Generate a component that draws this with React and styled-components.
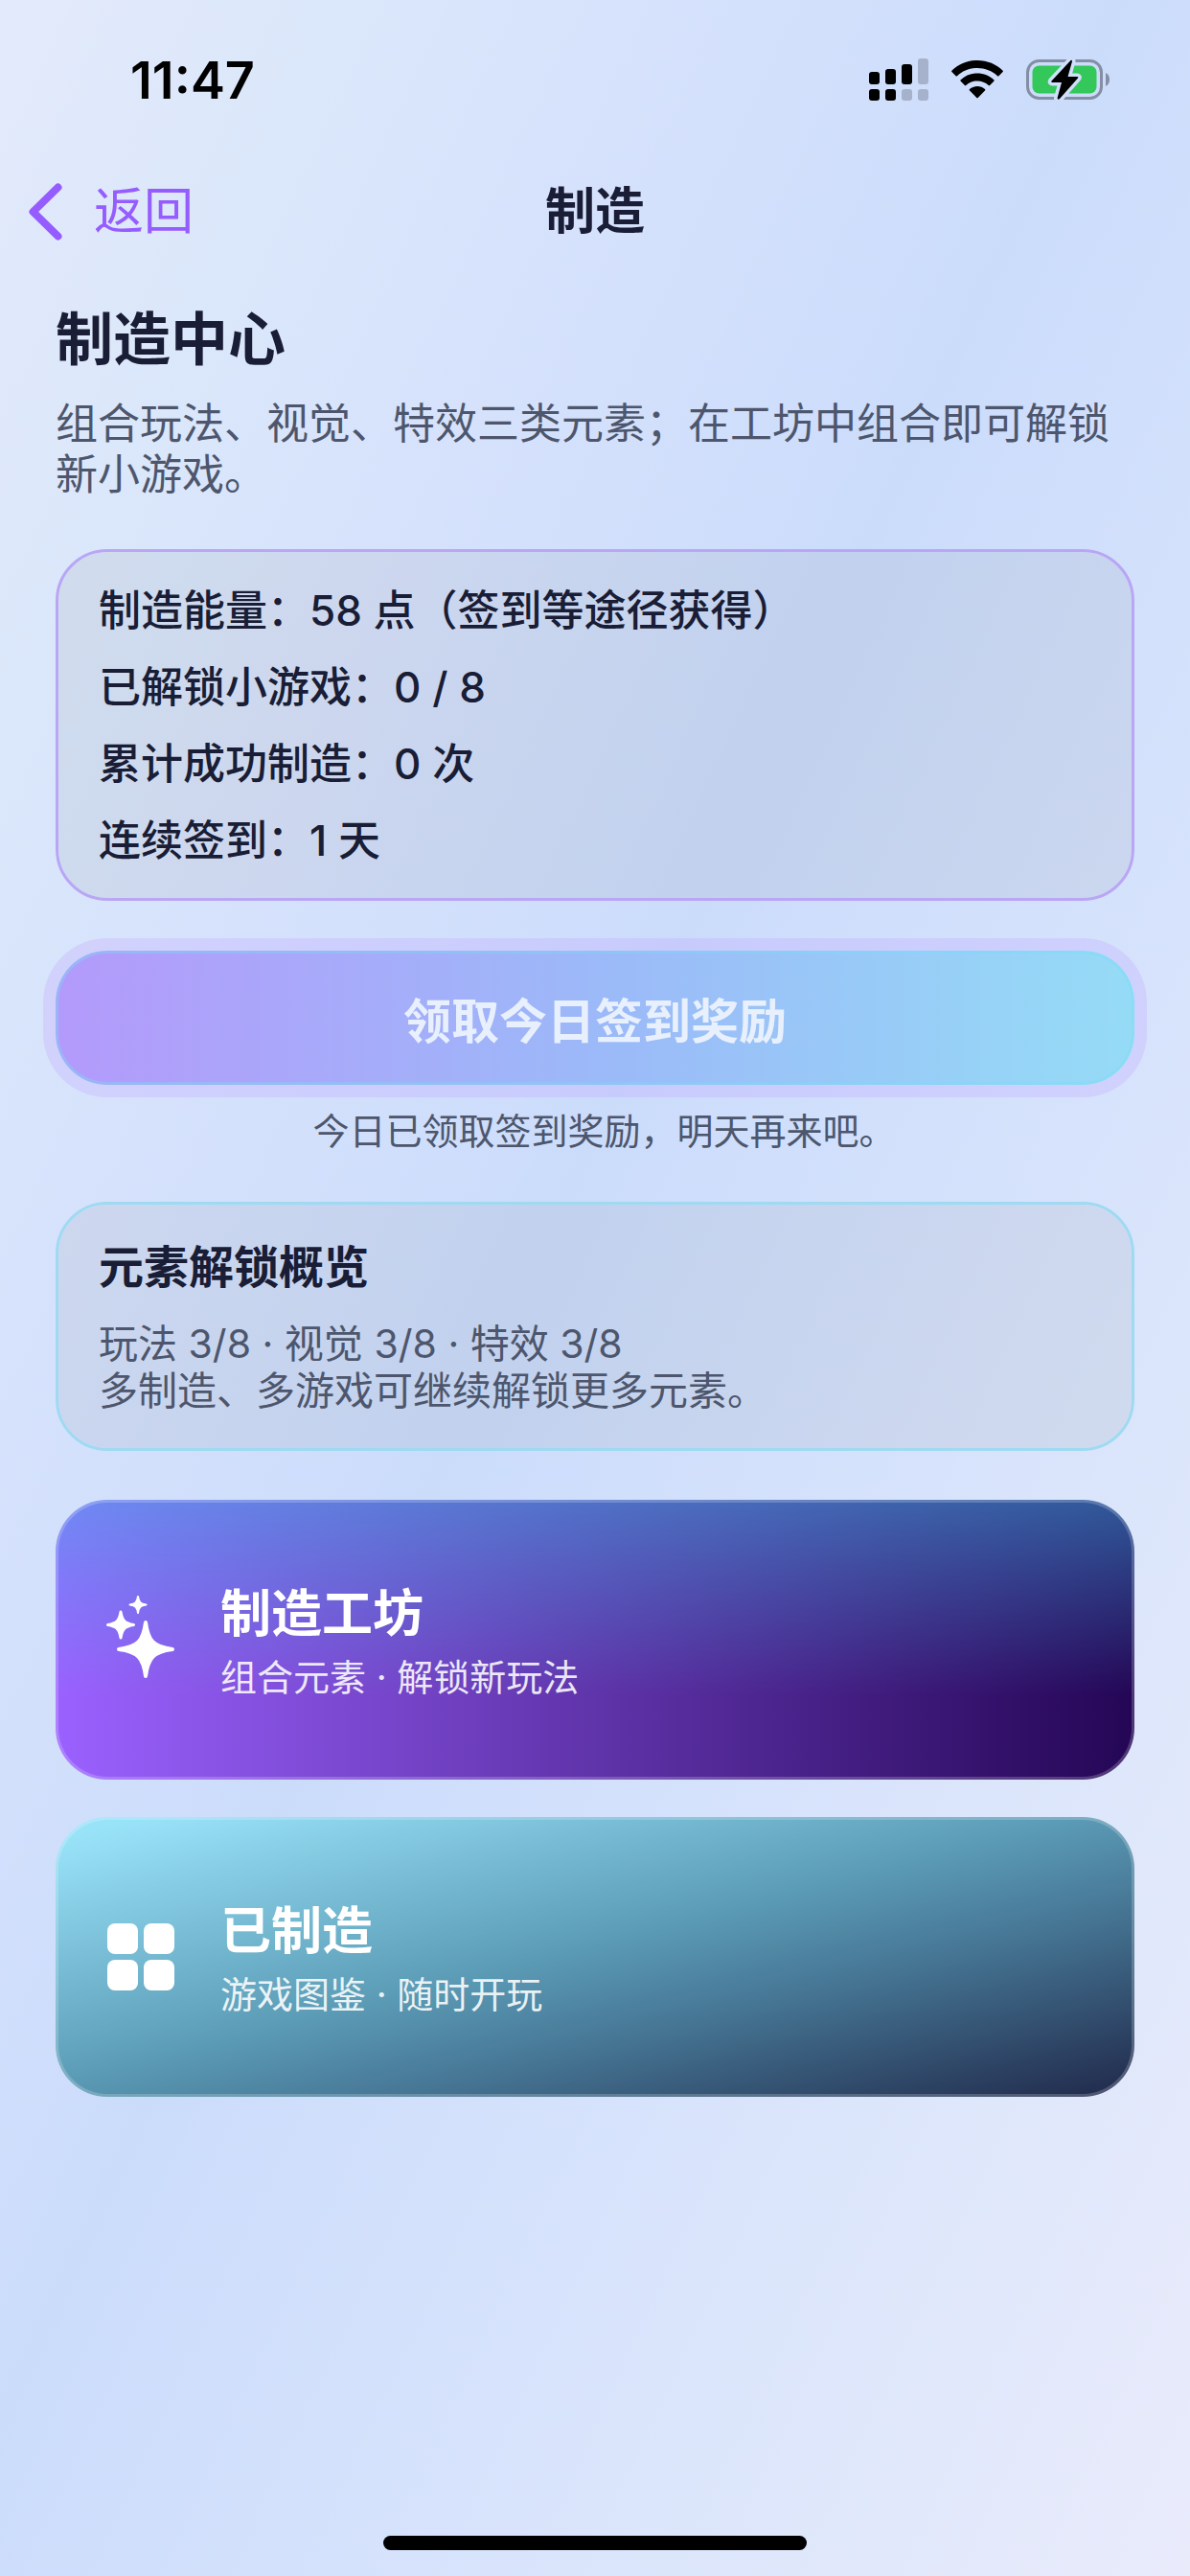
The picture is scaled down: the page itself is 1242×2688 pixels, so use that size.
import React from "react";
import styled, { createGlobalStyle } from "styled-components";

const GlobalStyle = createGlobalStyle`
  * {
    box-sizing: border-box;
  }

  body {
    margin: 0;
    font-family: Inter, "Noto Sans CJK SC", sans-serif;
    color: #191d35;
  }
`;

const Screen = styled.div`
  min-height: 100vh;
  display: flex;
  flex-direction: column;
  background: linear-gradient(
    to bottom right,
    #e3eafb 0%,
    #dbe7fa 14%,
    #d6e2fc 28%,
    #cbdcfb 47%,
    #d7e3fc 68%,
    #dce6fb 78%,
    #e9ebfb 100%
  );
`;

const StatusBar = styled.div`
  height: 166px;
  padding: 0 84px 0 136px;
  display: flex;
  align-items: center;
  justify-content: space-between;
`;

const Time = styled.span`
  font-size: 54px;
  font-weight: 600;
  color: #000;
`;

const StatusIcons = styled.div`
  display: flex;
  align-items: center;
  gap: 24px;
`;

const NavBar = styled.header`
  height: 110px;
  padding: 0 28px;
  display: grid;
  grid-template-columns: 1fr auto 1fr;
  align-items: center;
`;

const BackButton = styled.button`
  justify-self: start;
  display: flex;
  align-items: center;
  gap: 30px;
  padding: 0;
  border: none;
  background: transparent;
  font-family: inherit;
  font-size: 52px;
  line-height: 72px;
  color: #955cff;
  cursor: pointer;
`;

const NavTitle = styled.h1`
  margin: 0;
  font-size: 52px;
  line-height: 72px;
  font-weight: 600;
`;

const Content = styled.main`
  padding: 42px 58px;
  display: flex;
  flex-direction: column;
`;

const PageTitle = styled.h2`
  margin: 0 0 26px;
  font-size: 60px;
  line-height: 72px;
  font-weight: 700;
`;

const Intro = styled.p`
  margin: 0 0 51px;
  font-size: 44px;
  line-height: 53px;
  color: #4d566c;
`;

const Panel = styled.section`
  border: 3px solid ${(props) => props.$border};
  border-radius: 54px;
  background: rgba(24, 16, 0, 0.05);
  background-clip: padding-box;
`;

const StatsPanel = styled(Panel)`
  padding: 21px 42px 20px;
  margin-bottom: 52px;
`;

const StatLine = styled.p`
  margin: 0;
  font-size: 44px;
  line-height: 80px;
  font-weight: 500;
`;

const ClaimButton = styled.button`
  height: 140px;
  padding: 0;
  border: 3px solid transparent;
  border-radius: 54px;
  background:
    linear-gradient(to right, #b39afb, #9bbaf8 52%, #95dbf6) padding-box,
    linear-gradient(to right, #9ab4f8, #90c4f8 50%, #8adcf7) border-box;
  box-shadow: 0 0 0 13px rgba(190, 160, 255, 0.28);
  font-family: inherit;
  font-size: 50px;
  font-weight: 600;
  color: #e8f0fd;
`;

const ClaimNote = styled.p`
  margin: 24px 0 50px;
  font-size: 38px;
  line-height: 48px;
  text-align: center;
  text-indent: 19px;
  color: #4d566c;
`;

const OverviewPanel = styled(Panel)`
  padding: 35px 42px 35px;
  margin-bottom: 51px;
`;

const OverviewTitle = styled.h3`
  margin: 0 0 26px;
  font-size: 47px;
  line-height: 60px;
  font-weight: 600;
`;

const OverviewText = styled.p`
  margin: 0;
  font-size: 41px;
  line-height: 49px;
  color: #4d566c;
`;

const CardList = styled.nav`
  display: flex;
  flex-direction: column;
  gap: 39px;
`;

const EntryCard = styled.a`
  height: 292px;
  padding: 0 42px;
  display: flex;
  align-items: center;
  gap: 39px;
  border: 3px solid rgba(255, 255, 255, 0.2);
  border-radius: 54px;
  background: ${(props) => props.$fill};
  background-origin: border-box;
  color: #fff;
  text-decoration: none;
`;

const EntryIcon = styled.span`
  width: 88px;
  display: flex;
  justify-content: center;
`;

const EntryLabel = styled.div`
  padding-top: 5px;
`;

const EntryTitle = styled.div`
  font-size: 53px;
  line-height: 72px;
  font-weight: 700;
`;

const EntryText = styled.div`
  font-size: 38px;
  line-height: 60px;
  color: rgba(255, 255, 255, 0.88);
`;

const HomeIndicator = styled.div`
  width: 442px;
  height: 15px;
  margin: auto auto 27px;
  border-radius: 8px;
  background: #000;
`;

function SignalIcon() {
  return (
    <svg width="62" height="44" viewBox="0 0 62 44" aria-hidden="true">
      <rect x="0" y="14" width="11" height="13" rx="3" />
      <rect x="17" y="11" width="11" height="16" rx="3" />
      <rect x="34" y="6" width="11" height="21" rx="3" />
      <rect x="51" y="0" width="11" height="27" rx="3" fill="#a6b2cc" />
      <rect x="0" y="32" width="11" height="12" rx="3" />
      <rect x="17" y="32" width="11" height="12" rx="3" />
      <rect x="34" y="32" width="11" height="12" rx="3" fill="#a6b2cc" />
      <rect x="51" y="32" width="11" height="12" rx="3" fill="#a6b2cc" />
    </svg>
  );
}

function WifiIcon() {
  return (
    <svg width="54" height="40" viewBox="0 0 54 40" aria-hidden="true">
      <path d="M27 0C16.5 0 7 4.100 0.400 10.700Q-0.200 11.400 0.400 12L4.600 16.200Q5.300 16.800 6 16.200C11.500 11 18.900 8 27 8S42.500 11 48 16.200Q48.700 16.800 49.400 16.200L53.600 12Q54.200 11.400 53.600 10.700C47 4.100 37.500 0 27 0Z" />
      <path d="M27 13.500C20.300 13.500 14.200 16.100 9.700 20.300Q9 21 9.700 21.700L13.900 25.900Q14.600 26.500 15.300 25.900C18.400 23.100 22.500 21.400 27 21.400S35.600 23.100 38.700 25.900Q39.400 26.500 40.100 25.900L44.300 21.700Q45 21 44.300 20.300C39.800 16.100 33.700 13.500 27 13.500Z" />
      <path d="M27 27C24 27 21.200 28.100 19 30Q18.300 30.700 19 31.400L26.300 38.900Q27 39.600 27.700 38.900L35 31.400Q35.700 30.700 35 30C32.800 28.100 30 27 27 27Z" />
    </svg>
  );
}

function BatteryIcon() {
  const bolt = "M46.500 1L26.500 22.500Q25.500 24 27.500 24H37L32.500 40.500Q33 42.500 35 41L54 19.500Q55 18 53 18H43.500L48 2Q48 0 46.500 1Z";
  return (
    <svg width="87" height="42" viewBox="0 0 87 42" aria-hidden="true">
      <rect x="1.500" y="1.500" width="77" height="39" rx="12" fill="none" stroke="#848ea5" strokeWidth="3" />
      <path d="M83 14Q87 16 87 21T83 28Z" fill="#848ea5" />
      <rect x="6.500" y="6.500" width="67" height="29" rx="7" fill="#34c759" />
      <path d={bolt} stroke="#d0dffb" strokeWidth="7" strokeLinejoin="round" />
      <path d={bolt} />
    </svg>
  );
}

function ChevronIcon() {
  return (
    <svg width="40" height="62" viewBox="0 0 40 62" fill="none" aria-hidden="true">
      <path
        d="M32.500 5.500L6.500 31L32.500 56.500"
        stroke="currentColor"
        strokeWidth="8"
        strokeLinecap="round"
        strokeLinejoin="round"
      />
    </svg>
  );
}

function SparklesIcon() {
  return (
    <svg
      width="72"
      height="92"
      viewBox="0 0 72 92"
      fill="currentColor"
      stroke="currentColor"
      strokeLinejoin="round"
      aria-hidden="true"
    >
      <path
        strokeWidth="4"
        d="M41 28C43.500 47 49 53.500 69 56C49 58.500 43.500 65 41 84C38.500 65 33 58.500 13 56C33 53.500 38.500 47 41 28Z"
      />
      <path
        strokeWidth="3"
        d="M15 17C16.500 26 19 29 28.500 30.500C19 32 16.500 35 15 44C13.500 35 11 32 1.500 30.500C11 29 13.500 26 15 17Z"
      />
      <path
        strokeWidth="2"
        d="M33 1C34 7 35.500 8.500 41.500 9.500C35.500 10.500 34 12 33 18C32 12 30.500 10.500 24.500 9.500C30.500 8.500 32 7 33 1Z"
      />
    </svg>
  );
}

function GridIcon() {
  return (
    <svg width="70" height="70" viewBox="0 0 70 70" fill="currentColor" aria-hidden="true">
      <rect x="0" y="0" width="32" height="32" rx="8" />
      <rect x="38" y="0" width="32" height="32" rx="8" />
      <rect x="0" y="38" width="32" height="32" rx="8" />
      <rect x="38" y="38" width="32" height="32" rx="8" />
    </svg>
  );
}

const stats = [
  "制造能量：58 点（签到等途径获得）",
  "已解锁小游戏：0 / 8",
  "累计成功制造：0 次",
  "连续签到：1 天",
];

const entries = [
  {
    title: "制造工坊",
    text: "组合元素 · 解锁新玩法",
    href: "#workshop",
    icon: <SparklesIcon />,
    fill: `linear-gradient(to bottom, rgba(62, 185, 232, 0.46), rgba(62, 150, 225, 0) 70%),
      linear-gradient(to right, #9b61ff, #240655)`,
  },
  {
    title: "已制造",
    text: "游戏图鉴 · 随时开玩",
    href: "#crafted",
    icon: <GridIcon />,
    fill: "linear-gradient(to bottom right, #99e3f9 4%, #5c9cb6 47%, #487a98 64%, #20284a 100%)",
  },
];

export default function App() {
  return (
    <>
      <GlobalStyle />
      <Screen>
        <StatusBar>
          <Time>11:47</Time>
          <StatusIcons>
            <SignalIcon />
            <WifiIcon />
            <BatteryIcon />
          </StatusIcons>
        </StatusBar>
        <NavBar>
          <BackButton type="button">
            <ChevronIcon />
            返回
          </BackButton>
          <NavTitle>制造</NavTitle>
        </NavBar>
        <Content>
          <PageTitle>制造中心</PageTitle>
          <Intro>组合玩法、视觉、特效三类元素；在工坊中组合即可解锁新小游戏。</Intro>
          <StatsPanel $border="#b9a6f4">
            {stats.map((line) => (
              <StatLine key={line}>{line}</StatLine>
            ))}
          </StatsPanel>
          <ClaimButton type="button" disabled>
            领取今日签到奖励
          </ClaimButton>
          <ClaimNote>今日已领取签到奖励，明天再来吧。</ClaimNote>
          <OverviewPanel $border="#9fdaf2">
            <OverviewTitle>元素解锁概览</OverviewTitle>
            <OverviewText>玩法 3/8 · 视觉 3/8 · 特效 3/8</OverviewText>
            <OverviewText>多制造、多游戏可继续解锁更多元素。</OverviewText>
          </OverviewPanel>
          <CardList>
            {entries.map((entry) => (
              <EntryCard key={entry.title} href={entry.href} $fill={entry.fill}>
                <EntryIcon>{entry.icon}</EntryIcon>
                <EntryLabel>
                  <EntryTitle>{entry.title}</EntryTitle>
                  <EntryText>{entry.text}</EntryText>
                </EntryLabel>
              </EntryCard>
            ))}
          </CardList>
        </Content>
        <HomeIndicator />
      </Screen>
    </>
  );
}
